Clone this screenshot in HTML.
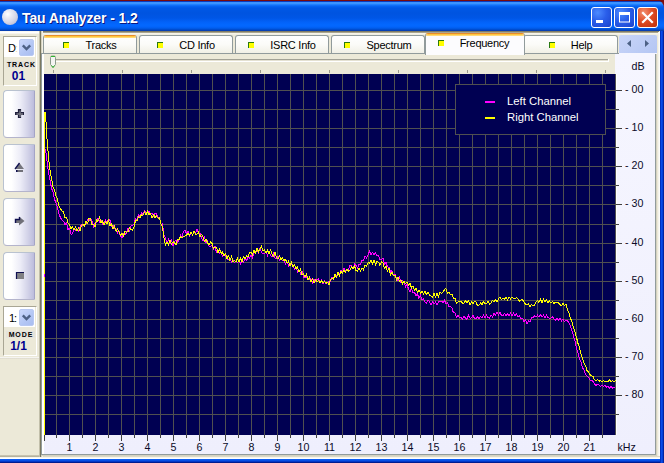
<!DOCTYPE html>
<html><head><meta charset="utf-8"><title>Tau Analyzer - 1.2</title>
<style>
*{box-sizing:border-box;margin:0;padding:0}
html,body{width:664px;height:463px;overflow:hidden;background:#ece9d8}
body{position:relative;font-family:"Liberation Sans",sans-serif;font-size:11px;color:#000}
.abs,.abs>*{position:absolute}
#corner{position:absolute;left:0;top:0;width:664px;height:8px;background:#7b0a0a}
#redtop{position:absolute;left:0;top:0;width:664px;height:1px;background:#7b0a0a;z-index:9}
#title{position:absolute;left:0;top:0;width:664px;height:31px;border-top-right-radius:8px;
background:linear-gradient(to bottom,#0a3cc0 0px,#0a3cc0 1.5px,#3a93ff 2px,#3a93ff 3.5px,#1f80ff 4.5px,#0766f4 6px,#0058e6 8px,#0054e0 13px,#0056e6 18px,#0262f8 22px,#0368ff 25px,#0264fa 27px,#0056de 29px,#0044c0 30px,#0a3aa8 31px)}
#title .txt{position:absolute;left:22px;top:10px;font:bold 14px/16px "Liberation Sans",sans-serif;color:#fff;text-shadow:1px 1px 0 #0a1883;white-space:nowrap;letter-spacing:-0.1px}
#ball{position:absolute;left:2px;top:9px;width:16px;height:16px;border-radius:50%;background:radial-gradient(circle at 36% 32%,#ffffff 0%,#ececf5 22%,#d6d6e6 55%,#bebed6 80%,#9c9cc0 100%)}
.cb{position:absolute;top:7px;width:21px;height:21px;border:1px solid #fff;border-radius:3px;background:radial-gradient(circle at 30% 25%,#4d8bff 0%,#2a5eea 45%,#1a42cc 100%)}
.cb.x{background:radial-gradient(circle at 30% 25%,#f39272 0%,#e04c24 45%,#bc2e0a 100%)}
#rb{position:absolute;left:660px;top:31px;width:4px;height:432px;background:linear-gradient(to right,#0030c0 0,#0030c0 25%,#0a4ce8 25%,#0a4ce8 50%,#0640d8 50%,#0640d8 75%,#0024a0 75%);z-index:6}
#bb{position:absolute;left:0;top:459px;width:664px;height:4px;background:linear-gradient(to bottom,#0c5cf2 0,#0c5cf2 25%,#0650e6 25%,#0650e6 50%,#0238c8 50%,#0238c8 75%,#001c90 75%)}
#topfade{position:absolute;left:0;top:31px;width:39px;height:3px;background:linear-gradient(to bottom,#f6f4ea 0,#ffffff 40%,#ffffff 70%,#ece9d8 100%)}
#topR{position:absolute;left:40px;top:31px;width:619px;height:4px;background:linear-gradient(to bottom,#807c66 0,#807c66 25%,#aaa690 25%,#aaa690 50%,#f6f4ea 50%,#f6f4ea 75%,#f1efe3 75%)}
#rightW{position:absolute;left:658px;top:32px;width:2px;height:426px;background:linear-gradient(to right,#f1efe3,#ffffff)}
#botW{position:absolute;left:0;top:456px;width:660px;height:3px;background:linear-gradient(#dcd9c6 0,#dcd9c6 33%,#f6f4ea 33%,#f6f4ea 66%,#ffffff 66%)}
#botL{position:absolute;left:0;top:455px;width:40px;height:2px;background:linear-gradient(#d0ccb8,#aeaa96)}
/* left panel */
.grp{position:absolute;left:3px;width:34px;border:1px solid;border-color:#a9a694 #ffffff #ffffff #a9a694;background:#ece9d8}
.combo{position:absolute;left:4px;width:31px;height:20px;background:#fff}
.combo b{position:absolute;left:15px;top:2px;width:15px;height:17px;border-radius:2px;border:1px solid #b9c9f2;background:linear-gradient(135deg,#cbd8fb,#b3c6f4 60%,#a9bdf0)}
.combo span{position:absolute;left:4px;top:5px;font:11px/13px "Liberation Sans",sans-serif;letter-spacing:-1px}
.combo u{text-decoration:none;color:#f3d9a8}
.lab{position:absolute;left:6px;width:29px;height:7px;background:#e4e3dc;font:bold 7px/7px "Liberation Sans",sans-serif;text-align:center;letter-spacing:0.9px;text-indent:0.9px;color:#000}
.val{position:absolute;left:3px;width:31px;text-align:center;font:bold 13px/13px "Liberation Sans",sans-serif;color:#000090;transform:scaleX(0.92)}
.btn{position:absolute;left:3px;width:32px;height:48px;border:1px solid #b9c2d0;border-right-color:#a4a4c6;border-bottom-color:#b4b4cc;border-radius:4px 1px 1px 4px;background:linear-gradient(to right,#ffffff 0%,#ffffff 25%,#ececf7 55%,#d2d2e8 80%,#bcbcdc 100%)}
#vsep{position:absolute;left:39px;top:31px;width:4px;height:426px;background:linear-gradient(to right,#c2bfaa 0,#c2bfaa 25%,#7a7860 25%,#7a7860 50%,#d5d2c0 50%,#d5d2c0 75%,#f1efe3 75%)}
#hsep{position:absolute;left:0;top:357px;width:39px;height:2px;background:linear-gradient(#fff,#d8d4c2)}
/* tabs */
.tab{position:absolute;top:35px;height:18px;border:1px solid #919b9c;border-bottom:none;border-radius:3px 3px 0 0;background:linear-gradient(#ffffff,#fbfbf8 50%,#f1f0e6);display:flex;justify-content:center;align-items:flex-start;overflow:hidden}
.tab.hot,.tab.sel{border-top-color:#e68b2c;border-left-color:#b8b49a #919b9c;}
.tab.hot::before,.tab.sel::before{content:"";position:absolute;left:0;right:0;top:0;height:2px;background:linear-gradient(#ffc73c 50%,#ffd978 50%)}
.tab.sel{top:33px;height:22px;background:#fcfcfe;z-index:3;padding-right:3px}
.tab i{display:block;margin:6px 16px 0 0;width:6px;height:6px;background:#ffff00;border-left:1px solid #2a7a12;border-top:1px solid #2a7a12}
.tab span{display:block;margin-top:3px;font:11px/13px "Liberation Sans",sans-serif;color:#000;letter-spacing:-0.25px;white-space:nowrap}
.tab.sel i{margin:6px 16px 0 0}
.tab.sel span{margin-top:3px}
#pane{position:absolute;left:41px;top:53px;width:615px;height:402px;border:1px solid #919b9c;background:linear-gradient(to right,#ffffff 0,#ffffff 2px,transparent 2px),linear-gradient(#f6f6ff,#efeffd);box-shadow:1px 1px 0 #d5d2c0}
#scroll{position:absolute;left:619px;top:35px;width:38px;height:19px;border-radius:2px 2px 0 0;border-bottom:1px solid #f6f6ff;background:linear-gradient(135deg,#c9d5f8,#b4c6f3);z-index:5}
#track{position:absolute;left:44px;top:54px;width:571px;height:20px;background:#ece9d8}
svg text{font-family:"Liberation Sans",sans-serif}
</style></head><body>
<div id="corner"></div><div id="redtop"></div>
<div id="title"><div id="ball"></div><div class="txt">Tau Analyzer - 1.2</div>
<div class="cb" style="left:591px"><svg width="19" height="19" style="position:absolute;left:0;top:0"><rect x="4" y="12" width="7" height="3" fill="#fff"/></svg></div>
<div class="cb" style="left:614px"><svg width="19" height="19" style="position:absolute;left:0;top:0"><rect x="4.5" y="5" width="10" height="9" fill="none" stroke="#fff" stroke-width="1"/><rect x="4" y="4" width="11" height="3" fill="#fff"/></svg></div>
<div class="cb x" style="left:637px"><svg width="19" height="19" style="position:absolute;left:0;top:0"><path d="M5 5 L14 14 M14 5 L5 14" stroke="#fff" stroke-width="2.2" stroke-linecap="square"/></svg></div>
</div>
<div id="topfade"></div><div id="topR"></div><div id="rightW"></div><div id="botW"></div><div id="botL"></div>
<div id="rb"></div><div id="bb"></div>

<div class="grp" style="top:36px;height:50px"></div>
<div class="combo" style="top:37px"><span>D<u>:</u></span><b><svg width="13" height="14" style="position:absolute;left:0;top:0"><path d="M2.800 5.300 L6.500 9 L10.200 5.300" fill="none" stroke="#4d6185" stroke-width="2.4"/></svg></b></div>
<div class="lab" style="top:61px">TRACK</div>
<div class="val" style="top:69px">01</div>

<div class="btn" style="top:90px"><svg width="30" height="45"><path d="M15.500 18 v9 M11 22.500 h9" stroke="#20203c" stroke-width="3.2"/><path d="M16 19.500 v6.500 M12.500 23 h6.500" stroke="#787882" stroke-width="1.4"/></svg></div>
<div class="btn" style="top:144px"><svg width="30" height="45"><path d="M11 24 L15.500 18 L20 24 Z" fill="#75757d"/><path d="M11 24 L15.500 18" stroke="#101050" stroke-width="1.3"/><rect x="12" y="25" width="7" height="2" fill="#707078"/><rect x="12" y="25" width="1.500" height="2" fill="#101050"/></svg></div>
<div class="btn" style="top:198px"><svg width="30" height="45"><path d="M11 20 h4 v-2.500 l5.500 4.500 l-5.500 4.500 v-2.500 h-4 Z" fill="#707078"/><path d="M11.500 24 v-3.500 h4 v-2.500" fill="none" stroke="#101050" stroke-width="1.4"/></svg></div>
<div class="btn" style="top:252px"><svg width="30" height="45"><rect x="12" y="19" width="8" height="7" fill="#808084"/><path d="M12.500 26 V19.500 H20" fill="none" stroke="#101050" stroke-width="1.2"/></svg></div>

<div class="grp" style="top:306px;height:50px"></div>
<div class="combo" style="top:307px"><span style="left:5px">1:</span><b><svg width="13" height="14" style="position:absolute;left:0;top:0"><path d="M2.800 5.300 L6.500 9 L10.200 5.300" fill="none" stroke="#4d6185" stroke-width="2.4"/></svg></b></div>
<div class="lab" style="top:331px">MODE</div>
<div class="val" style="top:339px">1/1</div>
<div id="hsep"></div>
<div id="vsep"></div>

<div class="tab hot" style="left:43px;width:94px"><i></i><span>Tracks</span></div><div class="tab" style="left:139px;width:94px"><i></i><span>CD Info</span></div><div class="tab" style="left:235px;width:94px"><i></i><span>ISRC Info</span></div><div class="tab" style="left:331px;width:94px"><i></i><span>Spectrum</span></div><div class="tab sel" style="left:425px;width:100px"><i></i><span>Frequency</span></div><div class="tab" style="left:523px;width:95px"><i></i><span>Help</span></div>
<div id="scroll"><svg width="38" height="18"><path d="M12 5 L8 8.500 L12 12 Z M26 5 L30 8.500 L26 12 Z" fill="#4d6185"/></svg></div>
<div id="pane"></div>
<div id="track"></div>
<svg style="position:absolute;left:0;top:0" width="664" height="463">
<g fill="#9a988c"><rect x="53" y="70" width="1" height="3"/><rect x="122" y="70" width="1" height="3"/><rect x="191" y="70" width="1" height="3"/><rect x="260" y="70" width="1" height="3"/><rect x="329" y="70" width="1" height="3"/><rect x="398" y="70" width="1" height="3"/><rect x="467" y="70" width="1" height="3"/><rect x="536" y="70" width="1" height="3"/><rect x="605" y="70" width="1" height="3"/></g>
<rect x="56" y="59" width="553" height="1" fill="#a3a296"/><rect x="56" y="60" width="553" height="1" fill="#e4e1d2"/><rect x="56" y="61" width="553" height="1" fill="#ffffff"/><rect x="608" y="59" width="1" height="3" fill="#ffffff"/>
<path d="M50.5 57.5 q0 -1.5 1.5 -1.5 h2 q1.500 0 1.500 1.500 v7 l-2.500 3 l-2.500 -3 z" fill="#f4f4f2" stroke="#8a9a8a" stroke-width="1"/>
<path d="M51 56.500 h4 M51.500 65.500 l1.500 2 l1.500 -2" stroke="#2fb62f" stroke-width="1" fill="none"/>
<rect x="616" y="74" width="1" height="361" fill="#ffffff"/><g fill="#404040"><rect x="44" y="435" width="1" height="6"/><rect x="56" y="435" width="1" height="3"/><rect x="69" y="435" width="1" height="6"/><rect x="82" y="435" width="1" height="3"/><rect x="95" y="435" width="1" height="6"/><rect x="108" y="435" width="1" height="3"/><rect x="121" y="435" width="1" height="6"/><rect x="134" y="435" width="1" height="3"/><rect x="147" y="435" width="1" height="6"/><rect x="160" y="435" width="1" height="3"/><rect x="173" y="435" width="1" height="6"/><rect x="186" y="435" width="1" height="3"/><rect x="199" y="435" width="1" height="6"/><rect x="212" y="435" width="1" height="3"/><rect x="225" y="435" width="1" height="6"/><rect x="238" y="435" width="1" height="3"/><rect x="251" y="435" width="1" height="6"/><rect x="264" y="435" width="1" height="3"/><rect x="277" y="435" width="1" height="6"/><rect x="290" y="435" width="1" height="3"/><rect x="303" y="435" width="1" height="6"/><rect x="316" y="435" width="1" height="3"/><rect x="329" y="435" width="1" height="6"/><rect x="342" y="435" width="1" height="3"/><rect x="355" y="435" width="1" height="6"/><rect x="368" y="435" width="1" height="3"/><rect x="381" y="435" width="1" height="6"/><rect x="394" y="435" width="1" height="3"/><rect x="407" y="435" width="1" height="6"/><rect x="420" y="435" width="1" height="3"/><rect x="433" y="435" width="1" height="6"/><rect x="446" y="435" width="1" height="3"/><rect x="459" y="435" width="1" height="6"/><rect x="472" y="435" width="1" height="3"/><rect x="485" y="435" width="1" height="6"/><rect x="498" y="435" width="1" height="3"/><rect x="511" y="435" width="1" height="6"/><rect x="524" y="435" width="1" height="3"/><rect x="537" y="435" width="1" height="6"/><rect x="550" y="435" width="1" height="3"/><rect x="563" y="435" width="1" height="6"/><rect x="576" y="435" width="1" height="3"/><rect x="589" y="435" width="1" height="6"/><rect x="602" y="435" width="1" height="3"/><rect x="616" y="90" width="6" height="1"/><rect x="616" y="109" width="3" height="1"/><rect x="616" y="128" width="6" height="1"/><rect x="616" y="147" width="3" height="1"/><rect x="616" y="166" width="6" height="1"/><rect x="616" y="185" width="3" height="1"/><rect x="616" y="204" width="6" height="1"/><rect x="616" y="224" width="3" height="1"/><rect x="616" y="243" width="6" height="1"/><rect x="616" y="262" width="3" height="1"/><rect x="616" y="281" width="6" height="1"/><rect x="616" y="300" width="3" height="1"/><rect x="616" y="319" width="6" height="1"/><rect x="616" y="338" width="3" height="1"/><rect x="616" y="357" width="6" height="1"/><rect x="616" y="376" width="3" height="1"/><rect x="616" y="395" width="6" height="1"/><rect x="616" y="414" width="3" height="1"/></g>
<g font-size="10.67" fill="#0a0a28"><text x="69.5" y="451" text-anchor="middle">1</text><text x="95.5" y="451" text-anchor="middle">2</text><text x="121.5" y="451" text-anchor="middle">3</text><text x="147.5" y="451" text-anchor="middle">4</text><text x="173.5" y="451" text-anchor="middle">5</text><text x="199.5" y="451" text-anchor="middle">6</text><text x="225.5" y="451" text-anchor="middle">7</text><text x="251.5" y="451" text-anchor="middle">8</text><text x="277.5" y="451" text-anchor="middle">9</text><text x="303.5" y="451" text-anchor="middle">10</text><text x="329.5" y="451" text-anchor="middle">11</text><text x="355.5" y="451" text-anchor="middle">12</text><text x="381.5" y="451" text-anchor="middle">13</text><text x="407.5" y="451" text-anchor="middle">14</text><text x="433.5" y="451" text-anchor="middle">15</text><text x="459.5" y="451" text-anchor="middle">16</text><text x="485.5" y="451" text-anchor="middle">17</text><text x="511.5" y="451" text-anchor="middle">18</text><text x="537.5" y="451" text-anchor="middle">19</text><text x="563.5" y="451" text-anchor="middle">20</text><text x="589.5" y="451" text-anchor="middle">21</text><text x="625" y="93.4">- 00</text><text x="625" y="131.4">- 10</text><text x="625" y="169.4">- 20</text><text x="625" y="207.4">- 30</text><text x="625" y="246.4">- 40</text><text x="625" y="284.4">- 50</text><text x="625" y="322.4">- 60</text><text x="625" y="360.4">- 70</text><text x="625" y="398.4">- 80</text>
<text x="631.5" y="70">dB</text><text x="617.5" y="451">kHz</text></g>
</svg>
<svg style="position:absolute;left:44px;top:74px" width="572" height="361" shape-rendering="crispEdges">
<rect width="572" height="361" fill="#000052"/>
<g fill="#505050"><rect x="12" y="0" width="1" height="361"/><rect x="25" y="0" width="1" height="361"/><rect x="38" y="0" width="1" height="361"/><rect x="51" y="0" width="1" height="361"/><rect x="64" y="0" width="1" height="361"/><rect x="77" y="0" width="1" height="361"/><rect x="90" y="0" width="1" height="361"/><rect x="103" y="0" width="1" height="361"/><rect x="116" y="0" width="1" height="361"/><rect x="129" y="0" width="1" height="361"/><rect x="142" y="0" width="1" height="361"/><rect x="155" y="0" width="1" height="361"/><rect x="168" y="0" width="1" height="361"/><rect x="181" y="0" width="1" height="361"/><rect x="194" y="0" width="1" height="361"/><rect x="207" y="0" width="1" height="361"/><rect x="220" y="0" width="1" height="361"/><rect x="233" y="0" width="1" height="361"/><rect x="246" y="0" width="1" height="361"/><rect x="259" y="0" width="1" height="361"/><rect x="272" y="0" width="1" height="361"/><rect x="285" y="0" width="1" height="361"/><rect x="298" y="0" width="1" height="361"/><rect x="311" y="0" width="1" height="361"/><rect x="324" y="0" width="1" height="361"/><rect x="337" y="0" width="1" height="361"/><rect x="350" y="0" width="1" height="361"/><rect x="363" y="0" width="1" height="361"/><rect x="376" y="0" width="1" height="361"/><rect x="389" y="0" width="1" height="361"/><rect x="402" y="0" width="1" height="361"/><rect x="415" y="0" width="1" height="361"/><rect x="428" y="0" width="1" height="361"/><rect x="441" y="0" width="1" height="361"/><rect x="454" y="0" width="1" height="361"/><rect x="467" y="0" width="1" height="361"/><rect x="480" y="0" width="1" height="361"/><rect x="493" y="0" width="1" height="361"/><rect x="506" y="0" width="1" height="361"/><rect x="519" y="0" width="1" height="361"/><rect x="532" y="0" width="1" height="361"/><rect x="545" y="0" width="1" height="361"/><rect x="558" y="0" width="1" height="361"/><rect x="571" y="0" width="1" height="361"/><rect x="0" y="16" width="572" height="1"/><rect x="0" y="35" width="572" height="1"/><rect x="0" y="54" width="572" height="1"/><rect x="0" y="73" width="572" height="1"/><rect x="0" y="92" width="572" height="1"/><rect x="0" y="111" width="572" height="1"/><rect x="0" y="130" width="572" height="1"/><rect x="0" y="150" width="572" height="1"/><rect x="0" y="169" width="572" height="1"/><rect x="0" y="188" width="572" height="1"/><rect x="0" y="207" width="572" height="1"/><rect x="0" y="226" width="572" height="1"/><rect x="0" y="245" width="572" height="1"/><rect x="0" y="264" width="572" height="1"/><rect x="0" y="283" width="572" height="1"/><rect x="0" y="302" width="572" height="1"/><rect x="0" y="321" width="572" height="1"/><rect x="0" y="340" width="572" height="1"/></g>
<polyline points="1.5,75.3 3.0,87.4 4.5,98.5 6.0,105.9 7.5,114.2 9.0,118.3 10.5,125.2 12.0,129.3 13.5,133.4 15.0,140.0 16.5,143.8 18.0,146.3 19.5,147.1 21.0,150.5 22.5,148.7 24.0,155.4 25.5,154.4 27.0,160.1 28.5,160.0 30.0,154.0 31.5,156.2 33.0,154.7 34.5,157.3 36.0,153.4 37.5,150.7 39.0,152.0 40.5,151.5 42.0,150.4 43.5,145.8 45.0,147.0 46.5,144.5 48.0,146.9 49.5,153.2 51.0,149.6 52.5,148.8 54.0,143.9 55.5,147.8 57.0,145.6 58.5,150.4 60.0,148.4 61.5,146.1 63.0,149.2 64.5,145.2 66.0,146.5 67.5,152.6 69.0,150.7 70.5,154.8 72.0,154.6 73.5,158.9 75.0,157.2 76.5,162.0 78.0,163.5 79.5,159.9 81.0,160.4 82.5,159.0 84.0,154.6 85.5,157.4 87.0,152.0 88.5,151.2 90.0,150.7 91.5,144.4 93.0,145.6 94.5,140.5 96.0,142.8 97.5,138.6 99.0,140.7 100.5,136.6 102.0,139.1 103.5,138.1 105.0,136.9 106.5,140.0 108.0,139.1 109.5,142.0 111.0,139.1 112.5,139.9 114.0,143.7 115.5,144.3 117.0,150.3 118.5,149.8 120.0,160.8 121.5,163.7 123.0,169.5 124.5,165.4 126.0,169.5 127.5,166.2 129.0,171.5 130.5,167.8 132.0,165.7 133.5,168.2 135.0,165.9 136.5,161.2 138.0,162.8 139.5,157.7 141.0,155.7 142.5,159.9 144.0,157.4 145.5,161.9 147.0,157.7 148.5,161.0 150.0,157.6 151.5,159.6 153.0,155.1 154.5,159.9 156.0,159.1 157.5,163.7 159.0,166.4 160.5,163.5 162.0,169.0 163.5,167.0 165.0,172.1 166.5,172.4 168.0,171.1 169.5,175.1 171.0,172.5 172.5,178.4 174.0,176.2 175.5,179.5 177.0,178.2 178.5,182.3 180.0,179.7 181.5,181.6 183.0,184.8 184.5,185.6 186.0,184.0 187.5,188.6 189.0,186.4 190.5,188.7 192.0,186.9 193.5,188.7 195.0,186.5 196.5,189.9 198.0,185.6 199.5,188.1 201.0,185.2 202.5,186.7 204.0,183.3 205.5,184.6 207.0,180.8 208.5,183.6 210.0,178.5 211.5,178.8 213.0,176.5 214.5,178.9 216.0,174.0 217.5,178.3 219.0,179.6 220.5,179.9 222.0,178.0 223.5,181.3 225.0,177.4 226.5,181.8 228.0,182.7 229.5,179.0 231.0,184.3 232.5,184.1 234.0,182.3 235.5,186.6 237.0,184.7 238.5,186.9 240.0,186.0 241.5,189.8 243.0,187.8 244.5,191.7 246.0,188.8 247.5,190.2 249.0,192.0 250.5,195.5 252.0,193.0 253.5,197.7 255.0,195.6 256.5,199.7 258.0,197.2 259.5,203.0 261.0,203.6 262.5,202.3 264.0,206.1 265.5,205.2 267.0,204.6 268.5,208.5 270.0,205.0 271.5,207.5 273.0,205.5 274.5,204.8 276.0,208.9 277.5,206.1 279.0,210.1 280.5,206.7 282.0,209.8 283.5,208.9 285.0,207.3 286.5,207.2 288.0,203.0 289.5,204.5 291.0,199.7 292.5,202.3 294.0,198.8 295.5,200.2 297.0,196.4 298.5,198.0 300.0,194.5 301.5,197.2 303.0,196.5 304.5,195.1 306.0,191.5 307.5,192.0 309.0,195.2 310.5,190.0 312.0,191.3 313.5,193.8 315.0,190.6 316.5,190.5 318.0,185.9 319.5,186.3 321.0,181.8 322.5,184.0 324.0,181.3 325.5,177.2 327.0,180.5 328.5,178.4 330.0,180.5 331.5,178.8 333.0,181.9 334.5,181.2 336.0,185.9 337.5,185.4 339.0,183.8 340.5,190.0 342.0,188.2 343.5,193.0 345.0,193.1 346.5,198.1 348.0,196.6 349.5,201.3 351.0,200.6 352.5,203.7 354.0,206.7 355.5,203.6 357.0,208.4 358.5,206.7 360.0,207.4 361.5,213.1 363.0,210.1 364.5,215.1 366.0,217.5 367.5,214.5 369.0,219.2 370.5,218.2 372.0,221.7 373.5,220.1 375.0,224.4 376.5,221.4 378.0,226.3 379.5,224.5 381.0,228.2 382.5,229.2 384.0,225.8 385.5,227.7 387.0,230.8 388.5,227.6 390.0,230.0 391.5,228.2 393.0,231.3 394.5,227.4 396.0,227.5 397.5,227.1 399.0,228.8 400.5,226.3 402.0,229.8 403.5,228.6 405.0,232.8 406.5,232.8 408.0,234.3 409.5,238.9 411.0,238.7 412.5,243.1 414.0,241.5 415.5,243.8 417.0,242.9 418.5,245.3 420.0,242.0 421.5,244.4 423.0,245.4 424.5,241.2 426.0,244.2 427.5,243.9 429.0,241.3 430.5,244.5 432.0,245.1 433.5,242.8 435.0,244.6 436.5,242.6 438.0,243.7 439.5,241.3 441.0,243.5 442.5,241.3 444.0,243.5 445.5,244.0 447.0,240.8 448.5,243.0 450.0,239.3 451.5,241.1 453.0,238.4 454.5,240.7 456.0,238.4 457.5,241.5 459.0,241.6 460.5,239.6 462.0,241.6 463.5,240.1 465.0,241.5 466.5,239.3 468.0,242.1 469.5,239.3 471.0,241.7 472.5,239.7 474.0,242.9 475.5,241.6 477.0,244.7 478.5,244.2 480.0,247.4 481.5,245.5 483.0,250.0 484.5,247.0 486.0,247.9 487.5,243.1 489.0,244.0 490.5,241.6 492.0,243.3 493.5,241.2 495.0,242.9 496.5,240.6 498.0,243.2 499.5,241.0 501.0,243.4 502.5,241.2 504.0,243.5 505.5,244.5 507.0,244.2 508.5,242.6 510.0,245.2 511.5,246.4 513.0,244.0 514.5,246.3 516.0,244.4 517.5,247.1 519.0,244.7 520.5,247.6 522.0,245.9 523.5,246.9 525.0,248.8 526.5,252.3 528.0,256.8 529.5,262.2 531.0,267.3 532.5,274.1 534.0,279.1 535.5,284.9 537.0,288.2 538.5,293.7 540.0,295.8 541.5,300.1 543.0,302.1 544.5,303.4 546.0,306.0 547.5,306.3 549.0,307.4 550.5,310.1 552.0,311.3 553.5,310.3 555.0,310.8 556.5,312.8 558.0,311.3 559.5,312.6 561.0,311.2 562.5,313.0 564.0,312.0 565.5,314.1 567.0,312.5 568.5,314.1 570.0,313.0 571.5,314.3" fill="none" stroke="#ff00ff" stroke-width="1"/>
<polyline points="0.5,360.5 0.5,39.0 1.5,38.6 3.0,65.3 4.5,83.2 6.0,95.6 7.5,104.6 9.0,112.7 10.5,116.1 12.0,122.0 13.5,125.5 15.0,131.9 16.5,134.6 18.0,136.8 19.5,138.1 21.0,143.8 22.5,143.2 24.0,149.3 25.5,150.3 27.0,155.0 28.5,152.6 30.0,155.7 31.5,153.1 33.0,156.9 34.5,154.0 36.0,157.0 37.5,151.7 39.0,150.2 40.5,152.1 42.0,147.5 43.5,149.5 45.0,144.2 46.5,144.5 48.0,150.7 49.5,150.6 51.0,152.7 52.5,146.0 54.0,147.3 55.5,143.4 57.0,148.6 58.5,147.1 60.0,151.2 61.5,147.8 63.0,149.7 64.5,146.5 66.0,151.6 67.5,149.6 69.0,155.1 70.5,152.3 72.0,157.4 73.5,155.2 75.0,158.1 76.5,161.0 78.0,159.4 79.5,162.0 81.0,157.4 82.5,158.4 84.0,157.7 85.5,153.7 87.0,155.9 88.5,156.1 90.0,153.0 91.5,146.4 93.0,146.5 94.5,142.9 96.0,143.5 97.5,140.7 99.0,141.4 100.5,138.4 102.0,141.1 103.5,137.2 105.0,140.4 106.5,139.4 108.0,143.9 109.5,140.7 111.0,143.4 112.5,141.9 114.0,144.3 115.5,143.8 117.0,150.0 118.5,152.9 120.0,163.8 121.5,171.1 123.0,168.6 124.5,170.9 126.0,166.1 127.5,170.2 129.0,167.7 130.5,168.6 132.0,170.9 133.5,165.5 135.0,165.9 136.5,162.4 138.0,164.1 139.5,162.3 141.0,162.0 142.5,161.1 144.0,159.0 145.5,161.3 147.0,158.0 148.5,161.2 150.0,157.0 151.5,160.4 153.0,160.1 154.5,158.0 156.0,163.1 157.5,160.4 159.0,162.6 160.5,167.6 162.0,165.5 163.5,168.6 165.0,171.0 166.5,167.9 168.0,169.5 169.5,174.2 171.0,173.1 172.5,173.1 174.0,178.6 175.5,175.1 177.0,179.3 178.5,178.1 180.0,182.0 181.5,179.8 183.0,184.5 184.5,181.7 186.0,186.4 187.5,182.7 189.0,187.7 190.5,186.3 192.0,187.8 193.5,184.5 195.0,187.9 196.5,184.5 198.0,187.6 199.5,182.7 201.0,185.3 202.5,181.4 204.0,182.9 205.5,178.4 207.0,178.3 208.5,180.7 210.0,176.5 211.5,179.3 213.0,174.1 214.5,177.7 216.0,175.4 217.5,172.5 219.0,176.9 220.5,175.7 222.0,179.1 223.5,176.1 225.0,180.3 226.5,176.0 228.0,179.7 229.5,182.2 231.0,178.3 232.5,183.2 234.0,184.9 235.5,182.1 237.0,185.6 238.5,183.9 240.0,186.6 241.5,185.3 243.0,188.9 244.5,187.1 246.0,192.2 247.5,188.3 249.0,192.9 250.5,190.8 252.0,195.0 253.5,193.0 255.0,197.7 256.5,195.4 258.0,200.9 259.5,199.5 261.0,203.0 262.5,200.4 264.0,206.2 265.5,203.1 267.0,208.0 268.5,204.8 270.0,208.7 271.5,205.8 273.0,208.0 274.5,206.3 276.0,208.5 277.5,206.6 279.0,209.3 280.5,207.4 282.0,209.3 283.5,208.2 285.0,210.7 286.5,205.6 288.0,204.4 289.5,205.1 291.0,200.5 292.5,203.3 294.0,198.3 295.5,202.0 297.0,197.0 298.5,199.4 300.0,196.4 301.5,198.6 303.0,194.8 304.5,197.2 306.0,196.2 307.5,192.6 309.0,194.5 310.5,191.8 312.0,196.8 313.5,197.1 315.0,194.2 316.5,197.1 318.0,193.7 319.5,195.8 321.0,191.4 322.5,192.7 324.0,188.7 325.5,189.3 327.0,186.5 328.5,189.5 330.0,186.3 331.5,190.8 333.0,187.6 334.5,188.3 336.0,191.4 337.5,187.7 339.0,189.1 340.5,194.5 342.0,192.1 343.5,197.3 345.0,194.5 346.5,200.6 348.0,197.9 349.5,201.9 351.0,201.0 352.5,205.6 354.0,202.7 355.5,207.5 357.0,206.0 358.5,209.7 360.0,206.7 361.5,209.6 363.0,208.3 364.5,211.1 366.0,209.5 367.5,214.0 369.0,211.7 370.5,216.4 372.0,214.2 373.5,217.9 375.0,216.4 376.5,219.0 378.0,217.5 379.5,219.7 381.0,217.1 382.5,220.6 384.0,218.4 385.5,221.2 387.0,221.8 388.5,223.2 390.0,219.2 391.5,222.9 393.0,219.1 394.5,222.5 396.0,218.0 397.5,219.8 399.0,218.3 400.5,215.5 402.0,214.6 403.5,219.2 405.0,217.9 406.5,220.9 408.0,220.5 409.5,224.5 411.0,223.9 412.5,229.4 414.0,228.2 415.5,227.1 417.0,227.4 418.5,229.2 420.0,229.3 421.5,226.6 423.0,228.6 424.5,226.5 426.0,230.4 427.5,227.8 429.0,229.8 430.5,227.3 432.0,227.8 433.5,231.7 435.0,231.1 436.5,229.0 438.0,230.5 439.5,227.7 441.0,229.5 442.5,229.5 444.0,227.6 445.5,230.0 447.0,228.9 448.5,226.5 450.0,228.1 451.5,225.8 453.0,227.9 454.5,224.7 456.0,223.2 457.5,225.6 459.0,224.1 460.5,225.1 462.0,223.3 463.5,225.8 465.0,222.7 466.5,225.1 468.0,222.8 469.5,224.7 471.0,224.8 472.5,223.4 474.0,224.7 475.5,227.2 477.0,225.8 478.5,225.9 480.0,227.7 481.5,230.4 483.0,230.7 484.5,229.7 486.0,233.1 487.5,230.4 489.0,231.6 490.5,231.7 492.0,227.9 493.5,226.3 495.0,228.4 496.5,225.5 498.0,228.5 499.5,224.9 501.0,227.8 502.5,225.9 504.0,228.5 505.5,226.8 507.0,229.3 508.5,227.6 510.0,229.5 511.5,228.3 513.0,228.4 514.5,228.7 516.0,230.8 517.5,231.5 519.0,229.4 520.5,231.4 522.0,229.8 523.5,235.5 525.0,239.1 526.5,244.3 528.0,248.0 529.5,253.5 531.0,258.0 532.5,263.4 534.0,269.5 535.5,273.6 537.0,280.0 538.5,284.0 540.0,288.8 541.5,291.6 543.0,296.8 544.5,297.6 546.0,300.6 547.5,301.9 549.0,302.5 550.5,305.9 552.0,306.4 553.5,305.8 555.0,307.3 556.5,306.4 558.0,307.6 559.5,306.7 561.0,307.6 562.5,307.4 564.0,307.5 565.5,306.0 567.0,307.7 568.5,306.3 570.0,308.1 571.5,306.4" fill="none" stroke="#ffff00" stroke-width="1"/>
<rect x="0" y="200" width="1" height="3" fill="#ff00ff"/>
<rect x="411.500" y="10.500" width="150" height="50" fill="#000052" stroke="#505050"/>
<rect x="441" y="27" width="10" height="2" fill="#ff00ff"/>
<rect x="441" y="43" width="10" height="2" fill="#ffff00"/>
<g font-size="11.3" fill="#ffffff" shape-rendering="auto"><text x="463" y="30.8">Left Channel</text><text x="463" y="46.8">Right Channel</text></g>
</svg>
</body></html>
